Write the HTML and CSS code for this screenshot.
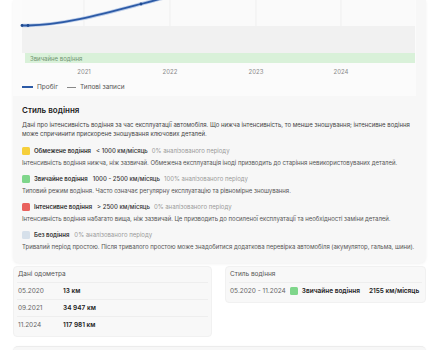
FILE: index.html
```html
<!DOCTYPE html>
<html lang="uk">
<head>
    <meta charset="UTF-8">
    <meta name="viewport" content="width=device-width, initial-scale=1.0">
    <title>Стиль водіння</title>
    <link rel="stylesheet" href="styles.css">
</head>
<body>
    <div class="page">
        <div class="card">
            <div class="chart">
                <svg class="plot" width="402" height="80" viewBox="0 0 402 80">
                    <rect x="9" y="0" width="393" height="26" fill="#fafafa"/>
                    <line x1="71" y1="0" x2="71" y2="26" stroke="#efefef"/>
                    <line x1="157" y1="0" x2="157" y2="26" stroke="#efefef"/>
                    <line x1="243" y1="0" x2="243" y2="26" stroke="#efefef"/>
                    <line x1="328" y1="0" x2="328" y2="26" stroke="#efefef"/>
                    <rect x="9" y="26" width="393" height="27" fill="#f1f1f1"/>
                    <rect x="12" y="53" width="390" height="10" fill="#d9f1d9"/>
                    <text x="17" y="60.5" class="band-label">Звичайне водіння</text>
                    <path d="M9 25.5 L15 25.5 C 50 25, 90 14, 128 4 S 150 -2, 162 -5" fill="none" stroke="#b9cbe8" stroke-width="3.5"/>
                    <path d="M9 25.5 L15 25.5 C 50 25, 90 14, 128 4 S 150 -2, 162 -5" fill="none" stroke="#2c5aa6" stroke-width="1.8"/>
                    <circle cx="9" cy="25.5" r="1.4" fill="#1f4a90"/>
                    <circle cx="15" cy="25.5" r="1.4" fill="#1f4a90"/>
                    <circle cx="128" cy="4" r="1.4" fill="#1f4a90"/>
                    <text x="71" y="74" class="year">2021</text>
                    <text x="157" y="74" class="year">2022</text>
                    <text x="243" y="74" class="year">2023</text>
                    <text x="328" y="74" class="year">2024</text>
                </svg>
                <div class="legend">
                    <span class="legend-item"><i class="swatch-line mileage"></i>Пробіг</span>
                    <span class="legend-item"><i class="swatch-line typical"></i>Типові записи</span>
                </div>
            </div>

            <div class="style-section">
                <h3>Стиль водіння</h3>
                <p class="intro">Дані про інтенсивність водіння за час експлуатації автомобіля. Що нижча інтенсивність, то менше зношування; інтенсивне водіння може спричинити прискорене зношування ключових деталей.</p>

                <div class="style-item">
                    <div class="style-head">
                        <span class="square yellow"></span>
                        <b>Обмежене водіння</b>
                        <span class="range">&lt; 1000 км/місяць</span>
                        <span class="share">0% аналізованого періоду</span>
                    </div>
                    <p class="desc">Інтенсивність водіння нижча, ніж зазвичай. Обмежена експлуатація іноді призводить до старіння невикористовуваних деталей.</p>
                </div>

                <div class="style-item">
                    <div class="style-head">
                        <span class="square green"></span>
                        <b>Звичайне водіння</b>
                        <span class="range">1000 - 2500 км/місяць</span>
                        <span class="share">100% аналізованого періоду</span>
                    </div>
                    <p class="desc">Типовий режим водіння. Часто означає регулярну експлуатацію та рівномірне зношування.</p>
                </div>

                <div class="style-item">
                    <div class="style-head">
                        <span class="square red"></span>
                        <b>Інтенсивне водіння</b>
                        <span class="range">&gt; 2500 км/місяць</span>
                        <span class="share">0% аналізованого періоду</span>
                    </div>
                    <p class="desc">Інтенсивність водіння набагато вища, ніж зазвичай. Це призводить до посиленої експлуатації та необхідності заміни деталей.</p>
                </div>

                <div class="style-item">
                    <div class="style-head">
                        <span class="square idle"></span>
                        <b>Без водіння</b>
                        <span class="share">0% аналізованого періоду</span>
                    </div>
                    <p class="desc">Тривалий період простою. Після тривалого простою може знадобитися додаткова перевірка автомобіля (акумулятор, гальма, шини).</p>
                </div>
            </div>
        </div>

        <div class="summary">
            <div class="mini-card">
                <div class="mini-title">Дані одометра</div>
                <div class="mini-row"><span class="date">05.2020</span><b>13 км</b></div>
                <div class="mini-row"><span class="date">09.2021</span><b>34 947 км</b></div>
                <div class="mini-row"><span class="date">11.2024</span><b>117 981 км</b></div>
            </div>
            <div class="mini-card">
                <div class="mini-title">Стиль водіння</div>
                <div class="mini-row">
                    <span class="period">05.2020 - 11.2024</span>
                    <span class="square green"></span>
                    <b class="style-name">Звичайне водіння</b>
                    <b>2155 км/місяць</b>
                </div>
            </div>
        </div>

        <div class="card next"></div>
    </div>
</body>
</html>
```

FILE: styles.css
```css
body {
    margin: 0;
    font-family: Inter, 'Noto Sans', sans-serif;
    background-color: #fff;
    color: #333;
}

.page {
    padding: 0 14px 0 13px;
}

.card {
    background-color: #f7f7f7;
    border-radius: 0 0 6px 6px;
    box-shadow: 0 1px 3px rgba(0, 0, 0, 0.06);
    padding-bottom: 6px;
}

.chart {
    background-color: #fbfbfb;
    margin-right: 10px;
    height: 96px;
}

.plot {
    display: block;
}

.band-label {
    font-size: 6px;
    fill: #6f9470;
}

.year {
    font-size: 6px;
    fill: #8a8a8a;
    text-anchor: middle;
}

.legend {
    display: flex;
    gap: 9px;
    padding: 3px 0 0 9px;
    font-size: 6.5px;
    color: #555;
}

.legend-item {
    display: flex;
    align-items: center;
    gap: 4px;
}

.swatch-line {
    display: inline-block;
    width: 11px;
}

.swatch-line.mileage {
    height: 2px;
    background-color: #2c5aa6;
}

.swatch-line.typical {
    width: 9px;
    height: 1px;
    background-color: #888;
}

.style-section {
    padding: 9px 2px 0 9px;
}

.style-section h3 {
    margin: 0 0 5px;
    font-size: 8px;
    font-weight: 600;
    color: #222;
}

.intro {
    margin: 0 0 7px;
    font-size: 6px;
    line-height: 9px;
    color: #444;
}

.style-item {
    margin-bottom: 4px;
}

.style-head {
    display: flex;
    align-items: center;
    gap: 4px;
    height: 11px;
    font-size: 6px;
}

.style-head b {
    font-weight: 600;
    color: #333;
    margin-right: 1px;
}

.range {
    font-weight: 500;
    color: #333;
}

.share {
    color: #999;
}

.square {
    display: inline-block;
    width: 8px;
    height: 8px;
    border-radius: 1.5px;
    flex-shrink: 0;
}

.square.yellow { background-color: #f6cf3a; }
.square.green { background-color: #7fd68b; }
.square.red { background-color: #e9615d; }
.square.idle { background-color: #d6e0ea; }

.desc {
    margin: 1px 0 0;
    font-size: 6px;
    line-height: 12px;
    letter-spacing: -0.03px;
    white-space: nowrap;
    color: #555;
}

.summary {
    display: grid;
    grid-template-columns: 199px 201px;
    gap: 13px;
    align-items: start;
    margin-top: 3px;
}

.mini-card {
    background-color: #f8f8f8;
    border: 1px solid #f1f1f1;
    border-radius: 4px;
    padding: 0 3px 3px;
    font-size: 6.5px;
}

.mini-title {
    height: 15px;
    line-height: 15px;
    padding-left: 1px;
    color: #555;
    border-bottom: 1px solid #eeeeee;
}

.mini-row {
    display: flex;
    align-items: center;
    height: 16px;
    padding-left: 1px;
    border-bottom: 1px solid #eeeeee;
    color: #666;
}

.mini-row:last-child {
    border-bottom: none;
}

.mini-row b {
    font-weight: 600;
    color: #222;
}

.date {
    width: 45px;
}

.period {
    margin-right: 4px;
}

.mini-row .square {
    margin-right: 4px;
}

.style-name {
    margin-right: 9px;
}

.card.next {
    margin-top: 9px;
    height: 4px;
    border-radius: 6px 6px 0 0;
    border-top: 1px solid #ececec;
    padding-bottom: 0;
}
```
